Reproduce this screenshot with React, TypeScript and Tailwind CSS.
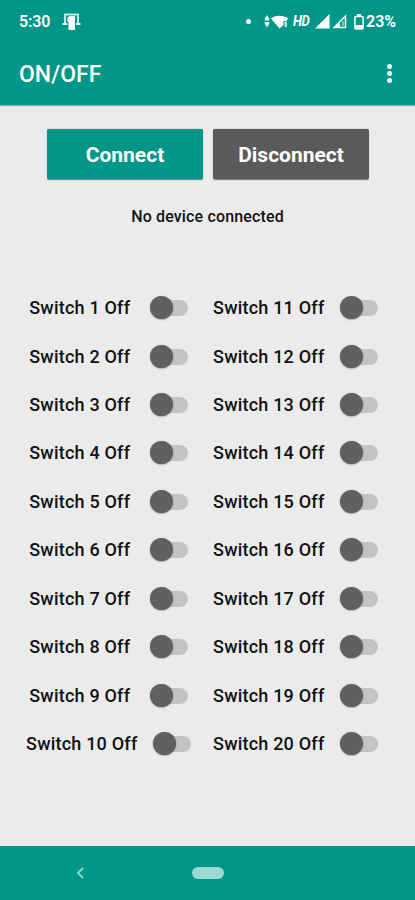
import React from 'react';

const columns = [
  [1, 2, 3, 4, 5, 6, 7, 8, 9, 10],
  [11, 12, 13, 14, 15, 16, 17, 18, 19, 20]
];

const StatusBar = () => {
  return (
    <div className="flex h-[43px] items-center pl-[19px] pr-[18px] text-[16px] font-semibold leading-none">
      <span className="w-[31px] whitespace-nowrap tracking-[-0.1px]">5:30</span>
      <svg className="ml-[12px]" width="20" height="18" viewBox="0 0 20 18" fill="none">
        <path d="M3 10V1.500h13V10" stroke="#c4e8e3" strokeWidth="2" />
        <path d="M.5 11h5M14 11h4.500" stroke="#e6f6f4" strokeWidth="2" />
        <path d="M5.500 4.500L7.500 3H13v14H6.500V9h-1z" fill="white" />
      </svg>

      <div className="ml-auto flex items-center">
        <span className="h-[5px] w-[5px] rounded-full bg-white" />
        <svg className="ml-[13px]" width="26" height="16" viewBox="0 0 26 16" fill="white">
          <path d="M3 1L5.200 4.500v2H.8v-2zM.8 8h4.400v2L3 13.500.8 10z" opacity=".9" />
          <path d="M7 4.500C11 .8 20 .8 24 4.500L22.500 7h-3v4L15.500 14.500z" />
          <path d="M20.500 7.500h2.500V13h-2.500z" opacity=".7" />
        </svg>
        <span className="ml-[3px] w-[18px] origin-left scale-x-[0.87] whitespace-nowrap text-[15px] font-bold italic tracking-[-0.5px]">HD</span>
        <svg className="ml-[4px]" width="33" height="15" viewBox="0 0 33 15" fill="none">
          <path d="M0 14.500L14.500 0v14.500z" fill="white" />
          <path d="M19 13.500L30.500 2v11.500z" stroke="white" strokeWidth="1.500" />
          <path d="M19 13.500l6-6v6z" fill="white" />
          <path d="M28 7v5" stroke="white" strokeWidth="1.300" opacity=".7" />
        </svg>
        <svg className="ml-[6px]" width="10" height="16" viewBox="0 0 10 16" fill="none">
          <path d="M3 0h4v2H3zM1 11h8v4H1z" fill="white" />
          <rect x=".9" y="2.400" width="8.200" height="12.600" rx="1" stroke="white" strokeWidth="1.500" />
        </svg>
        <span className="ml-[2px] w-[31px] whitespace-nowrap">23%</span>
      </div>
    </div>
  );
};

const Toggle = () => {
  return (
    <button className="relative h-[23px] w-[38px]" role="switch" aria-checked={false}>
      <span className="absolute left-[4px] right-0 top-[4px] h-[16px] rounded-full bg-[#c3c3c3]" />
      <span className="absolute left-0 top-0 h-[23px] w-[23px] rounded-full bg-[#606060] shadow-[0_0.5px_1.5px_rgba(0,0,0,0.4)]" />
    </button>
  );
};

const App = () => {
  return (
    <div className="flex h-[900px] w-[415px] flex-col overflow-hidden bg-[#ebebeb] font-['Roboto',sans-serif] text-[#111]">
      <header className="h-[105px] shrink-0 bg-[#009688] text-white shadow-[0_1px_1px_rgba(0,0,0,0.3)]">
        <StatusBar />
        <div className="flex h-[62px] items-center justify-between pl-[19px] pr-[23px]">
          <h1 className="text-[23px] font-medium leading-none">ON/OFF</h1>
          <div className="flex flex-col gap-[2px] pb-[2px]">
            <span className="h-[5px] w-[5px] rounded-full bg-white" />
            <span className="h-[5px] w-[5px] rounded-full bg-white" />
            <span className="h-[5px] w-[5px] rounded-full bg-white" />
          </div>
        </div>
      </header>

      <main className="flex-1">
        <div className="flex justify-center gap-[10px] pl-px pt-[24px] text-[21px] font-bold text-white">
          <button className="h-[50px] w-[156px] rounded-[2px] bg-[#009688] pt-[3px] shadow-[0_0.5px_1px_rgba(0,0,0,0.5)]">Connect</button>
          <button className="h-[50px] w-[156px] rounded-[2px] bg-[#5a5a5c] pt-[3px] shadow-[0_0.5px_1px_rgba(0,0,0,0.5)]">Disconnect</button>
        </div>
        <p className="mt-[28px] text-center text-[16px] font-medium leading-[20px] tracking-[0.15px]">No device connected</p>

        <div className="mt-[56.400px] flex pl-[15px]">
          {columns.map((column, index) => (
            <div key={index} className="w-[187px]">
              {column.map((n) => (
                <div
                  key={n}
                  className={`flex h-[48.450px] items-center justify-center ${n < 10 ? 'gap-[19.500px]' : 'gap-[15.500px]'}`}
                >
                  <span className="whitespace-nowrap text-[18px] font-medium tracking-[0.2px]">Switch {n} Off</span>
                  <Toggle />
                </div>
              ))}
            </div>
          ))}
        </div>
      </main>

      <nav className="flex h-[54px] shrink-0 items-center bg-[#009688] pl-[76px]">
        <svg width="8" height="12" viewBox="0 0 8 12" fill="none">
          <path d="M7 1L2 6l5 5" stroke="#8fd3cb" strokeWidth="2" />
        </svg>
        <span className="ml-[107.500px] h-[12px] w-[32.500px] rounded-full bg-[#9bd9d1]" />
      </nav>
    </div>
  );
};

export default App;
